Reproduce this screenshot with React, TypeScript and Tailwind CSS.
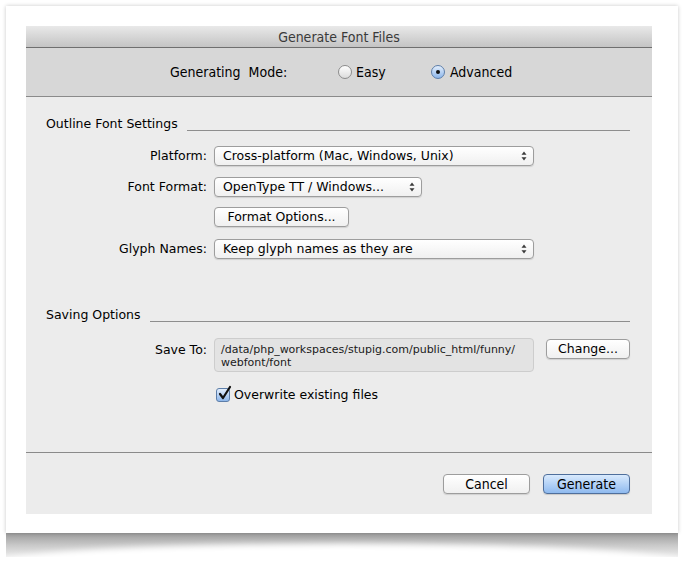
import React from 'react';

const ui = { fontFamily: '"DejaVu Sans", "Liberation Sans", sans-serif' };
const cond = { fontFamily: '"DejaVu Sans Condensed", "DejaVu Sans", "Liberation Sans", sans-serif' };

function Arrows() {
  return (
    <svg width="6" height="10" viewBox="0 0 6 10" className="shrink-0">
      <path d="M0.5 3.8 L3 0.5 L5.5 3.8 Z" fill="#3a3a3a" />
      <path d="M0.5 6.2 L3 9.5 L5.5 6.2 Z" fill="#3a3a3a" />
    </svg>
  );
}

function Popup({ text, width }: { text: string; width: string }) {
  return (
    <div
      className={`${width} flex h-[20px] items-center justify-between rounded-[4px] border border-[#9d9d9d] bg-gradient-to-b from-white to-[#f0f0f0] pl-[8px] pr-[6px] text-[12.5px] text-black shadow-[0_1px_1px_rgba(0,0,0,0.12)]`}
    >
      <span className="whitespace-pre leading-none">{text}</span>
      <Arrows />
    </div>
  );
}

function PushButton({ children, className = '' }: { children: React.ReactNode; className?: string }) {
  return (
    <div
      className={`flex h-[20px] items-center justify-center rounded-[4px] border border-[#9d9d9d] bg-gradient-to-b from-white to-[#f0f0f0] leading-none text-black shadow-[0_1px_1px_rgba(0,0,0,0.12)] ${className}`}
    >
      {children}
    </div>
  );
}

function Row({ label, children }: { label: string; children: React.ReactNode }) {
  return (
    <div className="flex h-[20px] items-center">
      <span className="w-[181px] text-right text-[12.5px] leading-none text-black">{label}</span>
      <div className="ml-[7px]">{children}</div>
    </div>
  );
}

function SectionHead({ title }: { title: string }) {
  return (
    <div className="flex h-[16px] items-center pl-[20px] pr-[22px]">
      <span className="text-[12.5px] leading-none text-black">{title}</span>
      <div className="ml-[9px] mt-[12px] h-px flex-1 bg-[#8e8e8e]" />
    </div>
  );
}

function Radio({ on }: { on?: boolean }) {
  return on ? (
    <span className="grid h-[14px] w-[14px] place-items-center rounded-full border border-[#5d7ea9] bg-gradient-to-b from-[#e3eefc] to-[#8db6ea]">
      <span className="block h-[4px] w-[4px] rounded-full bg-[#111]" />
    </span>
  ) : (
    <span className="block h-[14px] w-[14px] rounded-full border border-[#8c8c8c] bg-gradient-to-b from-white to-[#dcdcdc]" />
  );
}

export default function App() {
  return (
    <div className="relative h-[563px] w-[685px] overflow-hidden bg-white pl-[6px] pt-[6px]" style={ui}>
      <div className="relative z-10 h-[527px] w-[672px] bg-white p-[20px] shadow-[0_0_4px_rgba(0,0,0,0.22)]">
        <div className="flex h-[488px] w-[626px] flex-col bg-[#ececec]">
          {/* title bar */}
          <div
            className="flex h-[22px] items-center justify-center border-b border-[#6f6f6f] bg-gradient-to-b from-[#e9e9e9] to-[#c4c4c4] text-[14px] leading-none text-[#3a3a3a]"
            style={cond}
          >
            Generate Font Files
          </div>

          {/* mode band */}
          <div
            className="flex h-[49px] items-center justify-center border-b border-[#8a8a8a] bg-[#d7d7d7] pl-[3px] text-[14px] leading-none text-black"
            style={cond}
          >
            <span className="w-[115px] whitespace-pre">Generating  Mode:</span>
            <span className="ml-[53px]"><Radio /></span>
            <span className="ml-[4px] w-[75px]">Easy</span>
            <span><Radio on /></span>
            <span className="ml-[5px] w-[61px] whitespace-nowrap">Advanced</span>
          </div>

          {/* body */}
          <div className="h-[356px] border-b border-[#8a8a8a] pt-[19px]">
            <SectionHead title="Outline Font Settings" />
            <div className="mt-[14px]">
              <Row label="Platform:">
                <Popup text="Cross-platform (Mac, Windows, Unix)" width="w-[320px]" />
              </Row>
            </div>
            <div className="mt-[11px]">
              <Row label="Font Format:">
                <Popup text="OpenType TT / Windows..." width="w-[208px]" />
              </Row>
            </div>
            <div className="mt-[10px]">
              <Row label="">
                <PushButton className="w-[135px] text-[12.5px]">Format Options...</PushButton>
              </Row>
            </div>
            <div className="mt-[12px]">
              <Row label="Glyph Names:">
                <Popup text="Keep glyph names as they are" width="w-[320px]" />
              </Row>
            </div>

            <div className="mt-[48px]">
              <SectionHead title="Saving Options" />
            </div>

            <div className="mt-[15px] flex items-start">
              <span className="mt-[6px] w-[181px] text-right text-[12.5px] leading-none text-black">Save To:</span>
              <div className="ml-[7px] h-[34px] w-[320px] rounded-[4px] border border-[#cdcdcd] bg-[#e3e3e3] pl-[6px] pt-[4px] text-[11px] leading-[13px] text-[#1a1a1a]">
                /data/php_workspaces/stupig.com/public_html/funny/
                <br />
                webfont/font
              </div>
              <PushButton className="ml-[12px] mt-px w-[84px] text-[12.5px]">Change...</PushButton>
            </div>

            <div className="ml-[190px] mt-[15px] flex h-[16px] items-center">
              <span className="relative block h-[14px] w-[14px] rounded-[3px] border border-[#5d7ea9] bg-gradient-to-b from-[#e3eefc] to-[#8db6ea]">
                <svg width="14" height="16" viewBox="0 0 14 16" className="absolute -top-[4px] left-[1px]">
                  <path d="M2 9 L5 13 L12 2" fill="none" stroke="#111" strokeWidth="2.2" strokeLinecap="round" strokeLinejoin="round" />
                </svg>
              </span>
              <span className="ml-[4px] text-[12.5px] leading-none text-black">Overwrite existing files</span>
            </div>
          </div>

          {/* footer */}
          <div className="flex flex-1 justify-end gap-[13px] pr-[22px] pt-[21px]" style={cond}>
            <PushButton className="w-[87px] text-[14px]">Cancel</PushButton>
            <div className="flex h-[20px] w-[87px] items-center justify-center rounded-[4px] border border-[#4f6f9c] bg-gradient-to-b from-[#d9eafd] to-[#8fbaef] text-[14px] leading-none text-black shadow-[0_1px_1px_rgba(0,0,0,0.15)]">
              Generate
            </div>
          </div>
        </div>
      </div>

      {/* curled bottom shadow */}
      <div className="relative h-[24px] w-[672px] overflow-hidden bg-gradient-to-b from-[#9c9c9c] via-[#c8c8c8] to-[#eeeeee]">
        <div className="absolute -left-[10px] -right-[10px] top-[11px] h-[40px] rounded-[50%] bg-white blur-[3px]" />
      </div>
    </div>
  );
}
